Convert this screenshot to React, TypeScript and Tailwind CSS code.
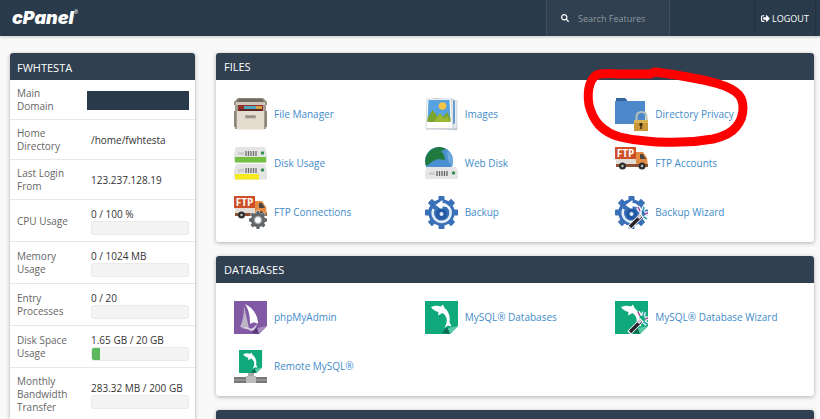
import type { ReactNode } from "react";
import { FaSearch, FaSignOutAlt } from "react-icons/fa";

interface Stat { label: string; value?: string; percent?: number; }
interface Feature { name: string; icon: ReactNode; circled?: boolean; }

const stats: Stat[] = [
  { label: "Main Domain" },
  { label: "Home Directory", value: "/home/fwhtesta" },
  { label: "Last Login From", value: "123.237.128.19" },
  { label: "CPU Usage", value: "0 / 100 %", percent: 0 },
  { label: "Memory Usage", value: "0 / 1024 MB", percent: 0 },
  { label: "Entry Processes", value: "0 / 20", percent: 0 },
  { label: "Disk Space Usage", value: "1.65 GB / 20 GB", percent: 8 },
  { label: "Monthly Bandwidth Transfer", value: "283.32 MB / 200 GB", percent: 0 },
];

function Icon({ children }: { children: ReactNode }) {
  return <svg viewBox="0 0 33 33" className="size-[33px] shrink-0" aria-hidden="true">{children}</svg>;
}

function Cabinet() {
  return (
    <>
      <path d="M4 0h25l4 4v3H0V4z" fill="#8d877b" />
      <path d="M5 1h23l2 3H3z" fill="#6f6b64" />
      <path d="M1 4h31v27H1z" fill="#a49e92" />
      <path d="M2 4h29v3H2z" fill="#cfc8ba" />
      <path d="M4 7h25v6H4z" fill="#96302c" />
      <path d="M10 8h13v3H10z" fill="#4fa5bd" />
      <path d="M22 8h6v3h-6z" fill="#d6a144" />
      <path d="M5 11h23v2H5z" fill="#5a2626" />
      <path d="M0 13h2v16H0zM31 13h2v16h-2z" fill="#8b857a" />
      <path d="M3 13h27v18.500H3z" fill="#e3dccf" />
      <path d="M11 17h11v3.500H11z" fill="#b3aca0" />
      <path d="M12 18h9v1.500h-9z" fill="#8e887d" />
    </>
  );
}

function Server({ y, fill, width }: { y: number; fill: string; width: number }) {
  return (
    <g transform={`translate(0 ${y})`}>
      <path d="M2 0h29l2 7v7.500q0 1-1 1H1q-1 0-1-1V7z" fill="#e4e4e4" />
      <path d={`M1 10h${width}v5.500H2q-1 0-1-1z`} fill={fill} />
      <path d="M12 4v5M14.500 4v5M17 4v5M19.500 4v5M22 4v5" stroke="#6c6c6c" strokeWidth="1.300" />
      <path d="M4 5h6v3H4z" fill="#cfcfcf" />
      <circle cx="28.500" cy="6" r="1.700" fill="#2f8f4a" />
    </g>
  );
}

function Pictures() {
  return (
    <>
      <path d="M8 0l24 3v29l-24-2z" fill="#e9eef2" stroke="#aeb8c0" strokeWidth=".5" />
      <path d="M27 2l3 .5v23l-3 1z" fill="#5d9bd5" />
      <path d="M26 1l2 0v28l-2 1z" fill="#fff" stroke="#9ba7b0" strokeWidth=".5" />
      <path d="M2 1h24l2 29.500H1z" fill="#fff" stroke="#b6bec4" strokeWidth=".6" />
      <path d="M3.500 2h21l1 22H2.500z" fill="#57a3e2" />
      <circle cx="17.500" cy="8" r="3.800" fill="#f7c443" />
      <path d="M2.600 20l5-8 5.500 7 2-3 3 3 4-5 3.300 6v4H2.500z" fill="#7aa52f" />
      <path d="M9 24l6-9 4 6 3-3 3.500 6z" fill="#9cb833" />
      <path d="M1 31h27l4-2v2.500H1z" fill="#b9c0c6" />
    </>
  );
}

function Globe() {
  return (
    <>
      <circle cx="14" cy="14" r="14" fill="#4a8fd0" />
      <path d="M1 19C-2 9 5 1 14 0c3 0 5 1 7 2l-5 2 3 4 1 5-7-1-5 2-4 3z" fill="#1f7a3d" />
      <path d="M22 4c5 4 7 10 5 16l-4-7z" fill="#6fa9df" />
      <path d="M2 20h29l2 4v7q0 1-1 1H1q-1 0-1-1v-7z" fill="#e6e6e6" />
      <path d="M12 24v5M14.500 24v5M17 24v5M19.500 24v5M22 24v5" stroke="#666" strokeWidth="1.300" />
      <path d="M4 25h6v3H4z" fill="#cfcfcf" />
      <circle cx="28.500" cy="26" r="1.700" fill="#2f8f4a" />
    </>
  );
}

function Folder() {
  return (
    <>
      <path d="M1 0h9l2 2v4H1z" fill="#34659e" />
      <path d="M0 3h30v23H0z" fill="#4d89ca" />
      <path d="M21.500 23v-4q0-5 5-5t5 5v4" fill="none" stroke="#b8bfb9" strokeWidth="2" />
      <path d="M19 22h14v11H19z" fill="#c8983a" />
      <path d="M19 22h14v3H19z" fill="#dab354" />
      <circle cx="26" cy="26.500" r="1.700" fill="#3e2d16" />
      <path d="M25.300 27h1.500v4h-1.500z" fill="#3e2d16" />
    </>
  );
}

function Truck() {
  return (
    <>
      <path d="M1 12h20v8H1z" fill="#e2ddd6" />
      <path d="M21 5h7l4 6 1 9H21z" fill="#e58a43" />
      <path d="M25 7h3l3 5h-6z" fill="#4d4540" />
      <path d="M0 0h21v12H0z" fill="#ce4f28" />
      <text x="10.500" y="9.500" textAnchor="middle" fontFamily="Open Sans, sans-serif" fontSize="10" fontWeight="700" fill="#fff">FTP</text>
      <path d="M1 17h32v3H1z" fill="#8e5134" />
      <circle cx="7.500" cy="19" r="3.500" fill="#2e2e2e" />
      <circle cx="7.500" cy="19" r="1.200" fill="#c9c9c9" />
      <circle cx="27" cy="19" r="3.500" fill="#2e2e2e" />
      <circle cx="27" cy="19" r="1.200" fill="#c9c9c9" />
    </>
  );
}

function Teeth({ cx, cy, r, w, fill }: { cx: number; cy: number; r: number; w: number; fill: string }) {
  return (
    <g fill={fill}>
      {[0, 45, 90, 135].map((angle) => (
        <rect key={angle} x={cx - w / 2} y={cy - r} width={w} height={r * 2} rx=".8" transform={`rotate(${angle} ${cx} ${cy})`} />
      ))}
      <circle cx={cx} cy={cy} r={r * 0.8} />
    </g>
  );
}

function BackupGear() {
  return (
    <>
      <Teeth cx={16.5} cy={16.5} r={16.5} w={6} fill="#3a70b7" />
      <path d="M8.500 13a9 9 0 1 0 14.500-2.500" fill="none" stroke="#e3edf8" strokeWidth="2.600" />
      <path d="M10.500 9l7-5v3q5 0 7 5-4-2-7-1.500V14z" fill="#fff" />
      <circle cx="16.500" cy="18" r="5.500" fill="#2459a4" />
      <circle cx="16.500" cy="18" r="2" fill="#e3edf8" />
    </>
  );
}

function Wand() {
  return (
    <>
      <path d="M14 32L27 19" stroke="#fff" strokeWidth="5" />
      <path d="M15 31L26 20" stroke="#29222b" strokeWidth="3.400" />
      <path d="M23 22l2.500-2.500" stroke="#d9c9d4" strokeWidth="3.400" />
      <path d="M25 15l-2-4M28 15l1-4M30 18l3-1M29 21l3 2" stroke="#fff" strokeWidth="4" />
      <path d="M25 15l-2-4M30 18l3-1" stroke="#a0499f" strokeWidth="1.600" />
      <path d="M28 15l1-4M29 21l3 2" stroke="#2c9fbc" strokeWidth="1.600" />
    </>
  );
}

function Dolphin() {
  return (
    <>
      <path d="M0 0h33v25l-8 8H0z" fill="#10a97c" />
      <path d="M17 32l5-6 3 7z" fill="#0c6c55" />
      <path d="M33 25l-8 8-2-6z" fill="#57c9a6" />
      <path d="M6 6c4-1.500 7-1.500 10-.5l2-2 1.500 3.500c4 3 6 8 5 14l2 4.500-3.500-1-3.500 2.500 2-5c1-5-1-8-4-10l-4.500 2.500.5-3.500C10 10 7.500 8.500 6 6z" fill="#fff" />
    </>
  );
}

const files: Feature[] = [
  { name: "File Manager", icon: <Cabinet /> },
  { name: "Images", icon: <Pictures /> },
  { name: "Directory Privacy", icon: <Folder />, circled: true },
  { name: "Disk Usage", icon: <><Server y={0} fill="#73bf44" width={31} /><Server y={17} fill="#f5ea1c" width={24} /></> },
  { name: "Web Disk", icon: <Globe /> },
  { name: "FTP Accounts", icon: <Truck /> },
  {
    name: "FTP Connections",
    icon: (
      <>
        <Truck />
        <Teeth cx={24} cy={24} r={9.5} w={4} fill="#fff" />
        <Teeth cx={24} cy={24} r={9} w={3.4} fill="#626669" />
        <circle cx="24" cy="24" r="3.600" fill="#fff" stroke="#a3a7a9" strokeWidth="1.400" />
      </>
    ),
  },
  { name: "Backup", icon: <BackupGear /> },
  { name: "Backup Wizard", icon: <><BackupGear /><Wand /></> },
];

const databases: Feature[] = [
  {
    name: "phpMyAdmin",
    icon: (
      <>
        <path d="M0 0h33v25l-8 8H0z" fill="#8259a5" />
        <path d="M18 32l5-6 2 7z" fill="#563874" />
        <path d="M33 25l-8 8-2-6z" fill="#a98bc4" />
        <path d="M10 5c0 8-1 15-4 21l9 1z" fill="#bdb4c6" />
        <path d="M11 3c8 4 13 11 13 20-3-2-5-2-8 0 0-8-1-14-5-20z" fill="#fff" />
        <path d="M7 27q5-2 8 0t8-4q-1 6-6 7-3-2-10-3z" fill="#d9d1e2" />
      </>
    ),
  },
  { name: "MySQL® Databases", icon: <Dolphin /> },
  { name: "MySQL® Database Wizard", icon: <><Dolphin /><Wand /></> },
  {
    name: "Remote MySQL®",
    icon: (
      <>
        <g transform="translate(5 0) scale(.7)"><Dolphin /></g>
        <path d="M14 23h6v5h-6z" fill="#a8a8a8" />
        <path d="M0 27h33v6H0z" fill="#777" />
        <path d="M0 29h33v2H0z" fill="#929292" />
        <path d="M12 26h10v7H12z" fill="#bcbcbc" />
      </>
    ),
  },
];

function Panel({ title, items }: { title?: string; items?: Feature[] }) {
  return (
    <section className="rounded-[3px] bg-white shadow-[0_1px_4px_rgb(0_0_0_/_0.3)]">
      <h2 className="h-[27px] rounded-t-[3px] bg-[#304050] px-2 text-[11px] leading-[28px] text-white">{title}</h2>
      {items && (
        <ul className="grid grid-cols-3 gap-y-4 pt-[18px] pr-2 pb-[13px] pl-[18px]">
          {items.map((item) => (
            <li key={item.name} className="relative">
              <a href="#" className="flex items-center gap-[7px] whitespace-nowrap text-[#428bca]">
                <Icon>{item.icon}</Icon>
                {item.name}
              </a>
              {item.circled && <Scribble />}
            </li>
          ))}
        </ul>
      )}
    </section>
  );
}

// hand-drawn marker ring over the feature link
function Scribble() {
  return (
    <svg viewBox="0 0 170 84" className="pointer-events-none absolute -top-8 -left-[34px] h-[84px] w-[170px]" fill="none" aria-hidden="true">
      <path
        d="M69 8L74 6Q91 8 109 11.500Q124 14 136 17.500Q152 22 158 29Q162 34 162 42Q162 53 155 61Q149 69 132 73Q115 76 99 76Q80 77 65 75Q51 74 39 71Q27 68 18 59Q11 51 8 39Q6 27 9 18Q12 9 19 8Q26 7 38 8Z"
        stroke="#fe0000"
        strokeWidth="9"
        strokeLinejoin="round"
      />
    </svg>
  );
}

export default function App() {
  return (
    <div className="h-screen overflow-hidden bg-[#f9f9f9] font-['Open_Sans',sans-serif] text-[10px] leading-[13px]">
      <header className="flex h-9 bg-[#293a4a] pr-1 text-white shadow-[0_1px_3px_rgb(0_0_0_/_0.2)]">
        <a href="#" className="flex flex-1 items-center pl-3" aria-label="cPanel home">
          <span className="font-['Inter',sans-serif] text-[18px] leading-9 font-black italic">cPanel</span>
          <span className="self-start pt-1.5 text-[5px]">®</span>
        </a>
        <label className="flex w-[124px] items-center gap-[9px] border-x border-[#3f4f5e] bg-[#304050] pl-3.5">
          <FaSearch className="size-2 shrink-0" />
          <input type="search" aria-label="Search Features" placeholder="Search Features" className="w-full min-w-0 bg-transparent text-[9px] outline-none placeholder:text-[#8e979f]" />
        </label>
        <a href="#" className="ml-[84px] flex w-[62px] items-center justify-center gap-0.5 border-x border-[#22313f] text-[9px]">
          <FaSignOutAlt className="size-[9px]" />
          LOGOUT
        </a>
      </header>
      <div className="flex items-start gap-[21px] pt-[17px] pr-1.5 pl-2.5">
        <aside className="w-[185px] shrink-0 rounded-[3px] bg-white shadow-[0_1px_4px_rgb(0_0_0_/_0.3)]">
          <h2 className="h-[27px] rounded-t-[3px] bg-[#304050] px-[7px] text-[11px] leading-[29px] text-white">FWHTESTA</h2>
          <table className="w-full table-fixed">
            <tbody>
              {stats.map((stat) => (
                <tr key={stat.label} className="border-b border-[#e8e8e8]">
                  <th scope="row" className="w-[77px] pt-[7px] pr-4 pb-[6px] pl-[7px] text-left align-middle font-normal text-[#666]">{stat.label}</th>
                  <td className="pt-2 pr-[6px] pb-[6px] align-middle text-[#333]">
                    {stat.value ? <p className="whitespace-nowrap px-1">{stat.value}</p> : <div className="h-[19px] bg-[#293a4a]" />}
                    {stat.percent !== undefined && (
                      <div className="ml-1 h-3.5 overflow-hidden rounded-[3px] border border-[#e9e9e9] bg-[#f4f4f4]">
                        <div className="h-full bg-[#5cb85c]" style={{ width: `${stat.percent}%` }} />
                      </div>
                    )}
                  </td>
                </tr>
              ))}
            </tbody>
          </table>
        </aside>
        <main className="flex min-w-0 flex-1 flex-col gap-3.5">
          <Panel title="FILES" items={files} />
          <Panel title="DATABASES" items={databases} />
          <Panel />
        </main>
      </div>
    </div>
  );
}
